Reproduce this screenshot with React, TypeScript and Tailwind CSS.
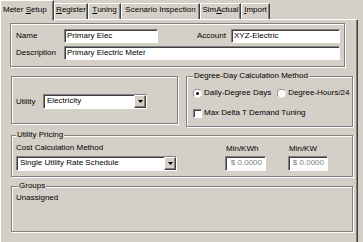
import React from "react";

const sunken =
  "bg-white border border-t-[#808080] border-l-[#808080] border-r-white border-b-white shadow-[inset_1px_1px_0_#404040]";
const etched = "relative border border-[#808080] shadow-[inset_1px_1px_0_#fff,1px_1px_0_#fff]";

function Legend({ children, left = 4 }: { children: React.ReactNode; left?: number }) {
  return (
    <span
      className={
        "absolute -top-[6px] bg-[#d4d0c8] px-[1px] leading-[10px] " + (left === 4 ? "left-[4px]" : "left-[6px]")
      }
    >
      {children}
    </span>
  );
}

function Select({ value, w }: { value: string; w: string }) {
  return (
    <div className={sunken + " flex h-[15px] items-stretch " + w}>
      <div className="flex-1 pl-[3px] leading-[11px] whitespace-nowrap overflow-hidden">{value}</div>
      <div className="flex w-[12px] items-center justify-center bg-[#d4d0c8] border border-t-white border-l-white border-r-[#404040] border-b-[#404040] shadow-[inset_-1px_-1px_0_#808080]">
        <svg width="5" height="3" viewBox="0 0 5 3">
          <polygon points="0,0 5,0 2.5,3" fill="#000" />
        </svg>
      </div>
    </div>
  );
}

function Radio({ on }: { on?: boolean }) {
  return (
    <svg width="9" height="9" viewBox="0 0 9 9" className="shrink-0">
      <circle cx="4.5" cy="4.5" r="4" fill="#fff" />
      <path d="M1.4 7.3 A4 4 0 0 1 7.3 1.4" stroke="#808080" strokeWidth="1" fill="none" />
      <path d="M7.6 1.7 A4 4 0 0 1 1.7 7.6" stroke="#e8e6e0" strokeWidth="1" fill="none" />
      {on && <circle cx="4.5" cy="4.5" r="1.5" fill="#000" />}
    </svg>
  );
}

function Tab({ label, w }: { label: React.ReactNode; w: string }) {
  return (
    <div
      className={
        "h-[16px] border-t border-l border-white border-r border-r-[#404040] shadow-[inset_-1px_0_0_#808080] flex justify-center pt-[1px] leading-[10px] whitespace-nowrap " +
        w
      }
    >
      {label}
    </div>
  );
}

export default function App() {
  return (
    <div className="w-[363px] h-[242px] bg-[#d4d0c8] overflow-hidden text-[8px] text-black font-['Liberation_Sans',Arial,sans-serif]">
      <div className="flex items-end h-[19px]">
        <div className="relative z-10 -mb-px h-[20px] w-[54px] bg-[#d4d0c8] border-t border-l border-white border-r border-r-[#404040] shadow-[inset_-1px_0_0_#808080] pt-[4px] pl-[2px] leading-[10px] whitespace-nowrap">
          Meter <u>S</u>etup
        </div>
        <Tab w="w-[34px]" label={<><u>R</u>egister</>} />
        <Tab w="w-[33px]" label={<><u>T</u>uning</>} />
        <Tab w="w-[79px]" label={<>Scenario Inspection</>} />
        <Tab w="w-[41px]" label={<>Sim<u>A</u>ctual</>} />
        <Tab w="w-[29px]" label={<><u>I</u>mport</>} />
      </div>
      <div className="w-[358px] h-[223px] border-l border-t border-white border-r border-r-[#404040] shadow-[inset_-1px_0_0_#808080] leading-[10px]">
        {/* Name group */}
        <div className={etched + " ml-[9px] mt-[3px] w-[335px] h-[44px] pt-[5px] pl-[5px]"}>
          <div className="flex items-center">
            <div className="w-[48px]">Name</div>
            <div className={sunken + " w-[94px] h-[14px] pl-[2px] leading-[11px]"}>Primary Elec</div>
            <div className="ml-[39px] w-[34px]">Account</div>
            <div className={sunken + " w-[109px] h-[14px] pl-[2px] leading-[11px]"}>XYZ-Electric</div>
          </div>
          <div className="flex items-center mt-[3px]">
            <div className="w-[48px]">Description</div>
            <div className={sunken + " w-[276px] h-[14px] pl-[2px] leading-[11px]"}>Primary Electric Meter</div>
          </div>
        </div>

        {/* Utility + Degree-day row */}
        <div className="flex items-start mt-[9px]">
          <div className={etched + " ml-[10px] w-[167px] h-[48px] pt-[17px] pl-[4px]"}>
            <div className="flex items-center">
              <div className="w-[27px]">Utility</div>
              <Select value="Electricity" w="w-[104px]" />
            </div>
          </div>
          <div className={etched + " ml-[8px] w-[167px] h-[51px] pt-[11px] pl-[6px]"}>
            <Legend left={6}>Degree-Day Calculation Method</Legend>
            <div className="flex items-center h-[10px]">
              <Radio on />
              <span className="ml-[2px]">Daily-Degree Days</span>
              <span className="ml-[6px] flex items-center">
                <Radio />
                <span className="ml-[2px]">Degree-Hours/24</span>
              </span>
            </div>
            <div className="flex items-center h-[10px] mt-[10px]">
              <div className={sunken + " w-[9px] h-[9px] shrink-0"} />
              <span className="ml-[2px]">Max Delta T Demand Tuning</span>
            </div>
          </div>
        </div>

        {/* Utility Pricing */}
        <div className={etched + " ml-[10px] mt-[8px] w-[342px] h-[42px] pt-[7px] pl-[4px] flex"}>
          <Legend>Utility Pricing</Legend>
          <div className="w-[161px]">
            <div>Cost Calculation Method</div>
            <div className="mt-[3px]">
              <Select value="Single Utility Rate Schedule" w="w-[161px]" />
            </div>
          </div>
          <div className="ml-[48px] w-[41px] pt-[1px]">
            <div className="pl-[1px]">Min/KWh</div>
            <div className={sunken + " mt-[2px] h-[15px] text-right pr-[3px] text-[#808080] leading-[12px]"}>$ 0.0000</div>
          </div>
          <div className="ml-[22px] w-[40px] pt-[1px]">
            <div className="pl-[1px]">Min/KW</div>
            <div className={sunken + " mt-[2px] h-[15px] text-right pr-[3px] text-[#808080] leading-[12px]"}>$ 0.0000</div>
          </div>
        </div>

        {/* Groups */}
        <div className={etched + " ml-[10px] mt-[9px] w-[342px] h-[46px] pt-[6px] pl-[4px]"}>
          <Legend left={6}>Groups</Legend>
          <div>Unassigned</div>
        </div>
      </div>
    </div>
  );
}
